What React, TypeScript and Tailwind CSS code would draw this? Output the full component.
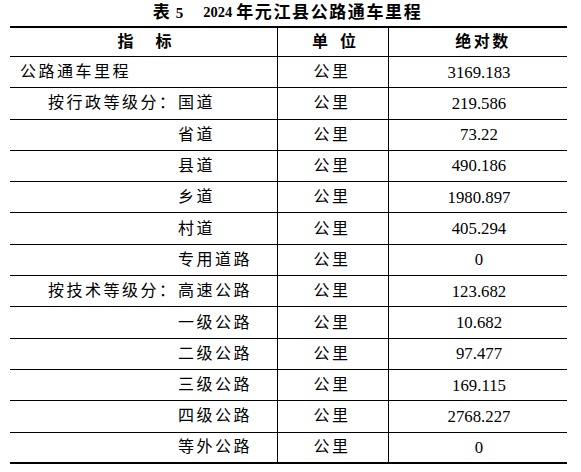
import React from 'react'

const rows = [
    { prefix: '', label: '公路通车里程', value: '3169.183', top: true },
    { prefix: '按行政等级分：', label: '国道', value: '219.586' },
    { prefix: '', label: '省道', value: '73.22' },
    { prefix: '', label: '县道', value: '490.186' },
    { prefix: '', label: '乡道', value: '1980.897' },
    { prefix: '', label: '村道', value: '405.294' },
    { prefix: '', label: '专用道路', value: '0' },
    { prefix: '按技术等级分：', label: '高速公路', value: '123.682' },
    { prefix: '', label: '一级公路', value: '10.682' },
    { prefix: '', label: '二级公路', value: '97.477' },
    { prefix: '', label: '三级公路', value: '169.115' },
    { prefix: '', label: '四级公路', value: '2768.227' },
    { prefix: '', label: '等外公路', value: '0' },
]

function App() {
    return (
        <div className="w-[581px] h-[472px] bg-white text-black [font-family:'Liberation_Serif','Noto_Sans_CJK_SC',serif]">
            <div className="h-[26px] flex items-center justify-center font-bold pr-[6px]">
                <span className="text-[17px]">表</span>
                <span className="text-[15px] ml-[6px]">5</span>
                <span className="text-[14.5px] ml-[20px]">2024</span>
                <span className="text-[17px] ml-[4px] tracking-[1.6px]">年元江县公路通车里程</span>
            </div>

            <div className="ml-[10px] w-[557px] border-t-2 border-black">
                <div className="grid grid-cols-[267px_111px_179px] h-[29px] border-b border-black font-bold text-[16px]">
                    <div className="flex items-center justify-center gap-[22px] pl-[2px]">
                        <span>指</span>
                        <span>标</span>
                    </div>
                    <div className="flex items-center justify-center gap-[12px] border-l border-black pl-[2px]">
                        <span>单</span>
                        <span>位</span>
                    </div>
                    <div className="flex items-center justify-center tracking-[2.5px] border-l border-black pl-[10px]">
                        绝对数
                    </div>
                </div>

                {rows.map((r, i) => (
                    <div key={i} className={"grid grid-cols-[267px_111px_179px] h-[31.3px] border-black " + (i == rows.length - 1 ? 'border-b-2' : 'border-b')}>
                        {r.top ? (
                            <div className="flex items-center pl-[10px] text-[16px] tracking-[2.5px]">{r.label}</div>
                        ) : (
                            <div className="flex items-center pl-[38px] text-[16px] tracking-[2.5px]">
                                <span className="w-[130px] shrink-0">{r.prefix}</span>
                                <span>{r.label}</span>
                            </div>
                        )}
                        <div className="flex items-center justify-center border-l border-black text-[16px] tracking-[2.5px] pr-[2px]">公里</div>
                        <div className="flex items-center justify-center border-l border-black text-[16.8px] pl-[2px]">{r.value}</div>
                    </div>
                ))}
            </div>
        </div>
    )
}

export default App
